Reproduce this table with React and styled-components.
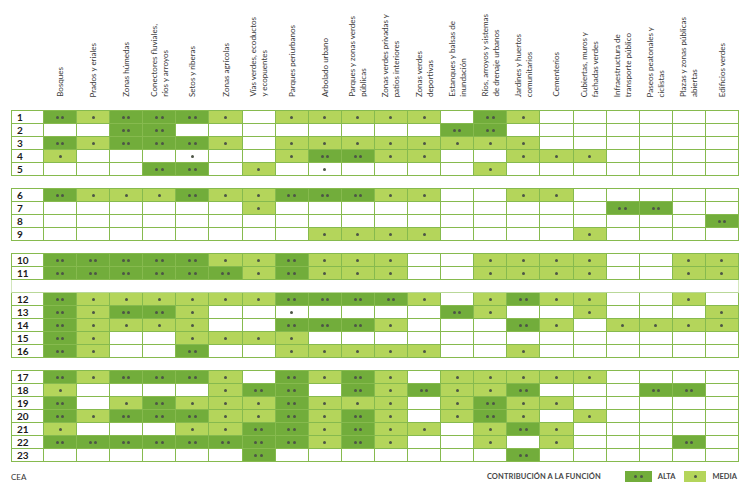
import React from "react";
import styled, { createGlobalStyle, css } from "styled-components";

const GlobalStyle = createGlobalStyle`
  html, body { margin: 0; padding: 0; background: #ffffff; }
  body { font-family: Lato, "Open Sans", "Liberation Sans", sans-serif; }
`;

const DARK = "#72ad3b";
const LIGHT = "#b4d55b";
const LINE = "#86ba4e";

const columns = [
  ["Bosques"],
  ["Prados y eriales"],
  ["Zonas húmedas"],
  ["Conectores fluviales,", "ríos y arroyos"],
  ["Setos y riberas"],
  ["Zonas agrícolas"],
  ["Vías verdes, ecoductos", "y ecopuentes"],
  ["Parques periurbanos"],
  ["Arbolado urbano"],
  ["Parques y zonas verdes", "públicas"],
  ["Zonas verdes privadas y", "patios interiores"],
  ["Zonas verdes", "deportivas"],
  ["Estanques y balsas de", "inundación"],
  ["Ríos, arroyos y sistemas", "de drenaje urbanos"],
  ["Jardines y huertos", "comunitarios"],
  ["Cementerios"],
  ["Cubiertas, muros y", "fachadas verdes"],
  ["Infraestructura de", "transporte público"],
  ["Paseos peatonales y", "ciclistas"],
  ["Plazas y zonas públicas", "abiertas"],
  ["Edificios verdes"],
];

// '2' alta, '1' media, '0' empty, 'w' white with dot, 'S' spacer, 'L' light spacer
const rows = [
  "212221011111021000000",
  "002200000000220000000",
  "212221011111111000000",
  "1000w0012211001110000",
  "00022010w000010000000",
  "S",
  "211121122211001100000",
  "000000100000000002200",
  "000000000000000000002",
  "000000001111000010000",
  "S",
  "222221121110011110011",
  "222222121110011110011",
  "L",
  "211111122221012110010",
  "2122100w0000210010001",
  "211110022210002101111",
  "210011110000000000000",
  "210020011111001000000",
  "S",
  "212221021210111110000",
  "100001220212112000220",
  "201211121110121100000",
  "212221121210121010000",
  "100011221211012100000",
  "222222221210010100020",
  "000000200000002000000",
];

const Page = styled.div`
  width: 750px;
  height: 491px;
  padding: 0 11px;
  box-sizing: border-box;
  overflow: hidden;
`;

const Grid = styled.div`
  display: grid;
  grid-template-columns: 33px repeat(21, 1fr);
  width: 728px;
`;

const Header = styled(Grid)`
  height: 110px;
`;

const HeadCell = styled.div`
  display: flex;
  justify-content: center;
  align-items: flex-end;
  padding-bottom: 13px;
  box-sizing: border-box;
`;

const Label = styled.span`
  writing-mode: vertical-rl;
  transform: rotate(180deg);
  white-space: nowrap;
  text-align: start;
  font-size: 8px;
  line-height: 11px;
  color: #3a3a3a;
`;

const Body = styled(Grid)`
  grid-auto-rows: 13px;
  border-top: 1px solid ${LINE};
`;

const NumCell = styled.div`
  box-sizing: border-box;
  display: flex;
  align-items: center;
  padding-left: 5px;
  border-left: 1px solid ${LINE};
  border-right: 1px solid ${LINE};
  border-bottom: 1px solid ${LINE};
  background: #ffffff;
  font-weight: 700;
  font-size: 10px;
  color: #1c1c1c;
`;

const Cell = styled.div`
  box-sizing: border-box;
  display: flex;
  align-items: center;
  justify-content: center;
  gap: 2.5px;
  border-right: 1px solid ${LINE};
  border-bottom: 1px solid ${LINE};
  background: ${(p) => (p.$level === "2" ? DARK : p.$level === "1" ? LIGHT : "#ffffff")};
`;

const Dot = styled.span`
  width: 3px;
  height: 3px;
  border-radius: 50%;
  background: #4d5646;
`;

const Spacer = styled.div`
  grid-column: 1 / -1;
  box-sizing: border-box;
  background: #ffffff;
  border-bottom: 1px solid ${LINE};
  ${(p) =>
    p.$light &&
    css`
      border-left: 1px solid #d2e6bc;
      border-right: 1px solid #d2e6bc;
      border-bottom: 1px solid #b9d898;
    `}
`;

const Footer = styled.div`
  display: flex;
  align-items: center;
  justify-content: space-between;
  height: 29px;
  padding-right: 2px;
`;

const Source = styled.span`
  font-size: 8px;
  color: #333333;
`;

const Legend = styled.div`
  display: flex;
  align-items: center;
`;

const LegendTitle = styled.span`
  font-size: 7.5px;
  font-weight: 700;
  color: #474747;
  letter-spacing: 0.1px;
  margin-right: 24px;
`;

const Swatch = styled.span`
  display: flex;
  align-items: center;
  justify-content: center;
  gap: 2.5px;
  height: 11px;
  width: ${(p) => (p.$level === "2" ? 27 : 22)}px;
  background: ${(p) => (p.$level === "2" ? DARK : LIGHT)};
`;

const LegendText = styled.span`
  font-size: 7.5px;
  font-weight: 700;
  color: #474747;
  margin-left: 6px;
  margin-right: ${(p) => (p.$last ? 0 : 9)}px;
`;

function Dots({ level }) {
  if (level === "2") return (<><Dot /><Dot /></>);
  if (level === "1" || level === "w") return <Dot />;
  return null;
}

export default function App() {
  let n = 0;
  return (
    <Page>
      <GlobalStyle />
      <Header>
        <HeadCell />
        {columns.map((lines, i) => (
          <HeadCell key={i}>
            <Label>
              {lines.map((l, j) => (
                <React.Fragment key={j}>
                  {j > 0 && <br />}
                  {l}
                </React.Fragment>
              ))}
            </Label>
          </HeadCell>
        ))}
      </Header>
      <Body>
        {rows.map((r, i) => {
          if (r === "S") return <Spacer key={i} />;
          if (r === "L") return <Spacer key={i} $light />;
          n += 1;
          return (
            <React.Fragment key={i}>
              <NumCell>{n}</NumCell>
              {r.split("").map((c, j) => (
                <Cell key={j} $level={c}>
                  <Dots level={c} />
                </Cell>
              ))}
            </React.Fragment>
          );
        })}
      </Body>
      <Footer>
        <Source>CEA</Source>
        <Legend>
          <LegendTitle>CONTRIBUCIÓN A LA FUNCIÓN</LegendTitle>
          <Swatch $level="2"><Dot /><Dot /></Swatch>
          <LegendText>ALTA</LegendText>
          <Swatch $level="1"><Dot /></Swatch>
          <LegendText $last>MEDIA</LegendText>
        </Legend>
      </Footer>
    </Page>
  );
}
